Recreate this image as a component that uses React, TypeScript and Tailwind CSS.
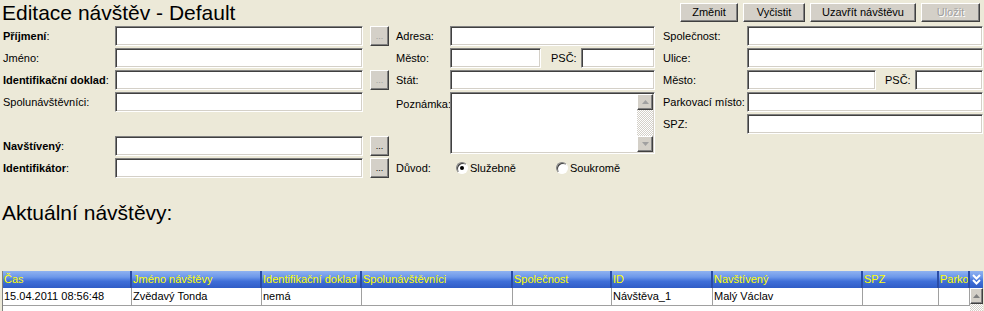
import type { ReactNode } from 'react'

const sunken =
  'bg-white border border-[#808080] border-b-white border-r-white shadow-[inset_1px_1px_0_#404040,inset_-1px_-1px_0_#d4d0c8]'
const raised =
  'bg-[#d4d0c8] border border-white border-r-[#404040] border-b-[#404040] shadow-[inset_-1px_-1px_0_#808080]'
const checker =
  'bg-[repeating-conic-gradient(#ffffff_0%_25%,#d4d0c8_0%_50%)] bg-[length:2px_2px]'

function Field({ w }: { w: string }) {
  return <div className={`h-[20px] ${w} ${sunken}`} />
}

function Dots({ dim }: { dim?: boolean }) {
  return (
    <div
      className={`ml-[7px] flex h-[20px] w-[19px] items-end justify-center pb-[4px] text-[9px] leading-none ${raised} ${
        dim ? 'text-[#a0a0a0]' : 'text-black'
      }`}
    >
      ...
    </div>
  )
}

function Btn({ children, w, disabled }: { children: ReactNode; w: string; disabled?: boolean }) {
  return (
    <div
      className={`flex h-[19px] items-center justify-center ${w} ${raised} ${
        disabled ? 'text-[#a0a0a0] [text-shadow:1px_1px_0_#ffffff]' : 'text-black'
      }`}
    >
      {children}
    </div>
  )
}

function Row({ label, w, children }: { label?: ReactNode; w: string; children?: ReactNode }) {
  return (
    <div className="mb-[2px] flex h-[20px] items-center">
      <div className={`${w} shrink-0 pl-[1px]`}>{label}</div>
      {children}
    </div>
  )
}

function Arrow({ up, color = '#a0a0a0' }: { up?: boolean; color?: string }) {
  return (
    <svg width="7" height="4" viewBox="0 0 7 4">
      <polygon points={up ? '0,4 7,4 3.5,0' : '0,0 7,0 3.5,4'} fill={color} />
    </svg>
  )
}

function ScrollBtn({ up }: { up?: boolean }) {
  return (
    <div className={`flex h-[16px] w-full shrink-0 items-center justify-center ${raised}`}>
      <Arrow up={up} />
    </div>
  )
}

function Radio({ checked, label }: { checked?: boolean; label: string }) {
  return (
    <div className="flex w-[100px] items-center">
      <div className="flex h-[12px] w-[12px] items-center justify-center rounded-full border border-[#808080] border-b-white border-r-white bg-white shadow-[inset_1px_1px_0_#404040]">
        {checked && <div className="h-[4px] w-[4px] rounded-full bg-black" />}
      </div>
      <span className="ml-[2px]">{label}</span>
    </div>
  )
}

const cols = [
  { t: 'Čas', w: 'w-[129px]', v: '15.04.2011 08:56:48' },
  { t: 'Jméno návštěvy', w: 'w-[130px]', v: 'Zvědavý Tonda' },
  { t: 'Identifikační doklad', w: 'w-[100px]', v: 'nemá' },
  { t: 'Spolunávštěvníci', w: 'w-[151px]', v: '' },
  { t: 'Společnost', w: 'w-[99px]', v: '' },
  { t: 'ID', w: 'w-[101px]', v: 'Návštěva_1' },
  { t: 'Navštívený', w: 'w-[150px]', v: 'Malý Václav' },
  { t: 'SPZ', w: 'w-[76px]', v: '' },
  { t: 'Parkovací místo', w: 'w-[31px]', v: '' },
]

const headBg =
  'bg-[linear-gradient(#8fb2f0_0%,#6d98ea_35%,#3f6fd8_60%,#2f5cc6_100%)]'

export default function App() {
  return (
    <div className="h-[311px] w-[984px] overflow-hidden bg-[#ece9d8] font-['Liberation_Sans',Arial,sans-serif] text-[11px] text-black">
      {/* title + action buttons */}
      <div className="flex h-[26px] items-start justify-between">
        <div className="mt-[1px] pl-[2px] text-[21px] leading-[24px]">Editace návštěv - Default</div>
        <div className="mr-[4px] mt-[3px] flex gap-[5px]">
          <Btn w="w-[58px]">Změnit</Btn>
          <Btn w="w-[62px]">Vyčistit</Btn>
          <Btn w="w-[106px]">Uzavřít návštěvu</Btn>
          <Btn w="w-[59px]" disabled>
            Uložit
          </Btn>
        </div>
      </div>

      {/* form */}
      <div className="flex h-[154px] pl-[2px]">
        <div className="w-[387px]">
          <Row w="w-[113px]" label={<><b>Příjmení</b>:</>}>
            <Field w="w-[248px]" />
            <Dots dim />
          </Row>
          <Row w="w-[113px]" label="Jméno:">
            <Field w="w-[248px]" />
          </Row>
          <Row w="w-[113px]" label={<><b>Identifikační doklad</b>:</>}>
            <Field w="w-[248px]" />
            <Dots dim />
          </Row>
          <Row w="w-[113px]" label="Spolunávštěvníci:">
            <Field w="w-[248px]" />
          </Row>
          <Row w="w-[113px]" />
          <Row w="w-[113px]" label={<><b>Navštívený</b>:</>}>
            <Field w="w-[248px]" />
            <Dots />
          </Row>
          <Row w="w-[113px]" label={<><b>Identifikátor</b>:</>}>
            <Field w="w-[248px]" />
            <Dots />
          </Row>
        </div>

        <div className="ml-[6px] w-[260px]">
          <Row w="w-[55px]" label="Adresa:">
            <Field w="w-[205px]" />
          </Row>
          <Row w="w-[55px]" label="Město:">
            <Field w="w-[91px]" />
            <span className="ml-[10px] w-[30px]">PSČ:</span>
            <Field w="w-[74px]" />
          </Row>
          <Row w="w-[55px]" label="Stát:">
            <Field w="w-[205px]" />
          </Row>
          <div className="mb-[4px] flex h-[62px]">
            <div className="w-[55px] shrink-0 pl-[1px] pt-[4px]">Poznámka:</div>
            <div className={`flex h-[62px] w-[205px] justify-end p-[1px] pl-0 ${sunken}`}>
              <div className="flex w-[16px] flex-col">
                <ScrollBtn up />
                <div className={`flex-1 ${checker}`} />
                <ScrollBtn />
              </div>
            </div>
          </div>
          <Row w="w-[55px]" label="Důvod:">
            <div className="ml-[6px] flex">
              <Radio checked label="Služebně" />
              <Radio label="Soukromě" />
            </div>
          </Row>
        </div>

        <div className="ml-[7px] w-[321px]">
          <Row w="w-[85px]" label="Společnost:">
            <Field w="w-[236px]" />
          </Row>
          <Row w="w-[85px]" label="Ulice:">
            <Field w="w-[236px]" />
          </Row>
          <Row w="w-[85px]" label="Město:">
            <Field w="w-[129px]" />
            <span className="ml-[9px] w-[30px]">PSČ:</span>
            <Field w="w-[68px]" />
          </Row>
          <Row w="w-[85px]" label="Parkovací místo:">
            <Field w="w-[236px]" />
          </Row>
          <Row w="w-[85px]" label="SPZ:">
            <Field w="w-[236px]" />
          </Row>
        </div>
      </div>

      <div className="mt-[21px] pl-[2px] text-[21px] leading-[24px]">Aktuální návštěvy:</div>

      {/* grid */}
      <div className="ml-[2px] mt-[46px] flex h-[40px] w-[981px] border-l border-[#808080] bg-white">
        <div className="flex flex-col">
          <div className={`flex h-[17px] ${headBg}`}>
            {cols.map((c) => (
              <div
                key={c.t}
                className={`${c.w} shrink-0 overflow-hidden whitespace-nowrap border-r-2 border-r-[#2a4ca6] pl-[1px] leading-[17px] text-[#ffff00]`}
              >
                {c.t}
              </div>
            ))}
          </div>
          <div className="flex h-[18px] border-b border-[#a0a0a0]">
            {cols.map((c) => (
              <div
                key={c.t}
                className={`${c.w} shrink-0 overflow-hidden whitespace-nowrap border-r border-[#a0a0a0] pl-[1px] leading-[17px]`}
              >
                {c.v}
              </div>
            ))}
          </div>
        </div>
        <div className="flex w-[14px] flex-col">
          <div className={`flex h-[17px] items-center justify-center ${headBg}`}>
            <svg width="9" height="11" viewBox="0 0 9 11">
              <polyline points="1,1 4.5,4.5 8,1" fill="none" stroke="#ffffff" strokeWidth="2" />
              <polyline points="1,6 4.5,9.5 8,6" fill="none" stroke="#ffffff" strokeWidth="2" />
            </svg>
          </div>
          <div className={`flex h-[16px] items-center justify-center ${raised}`}>
            <Arrow up color="#808080" />
          </div>
          <div className={`flex-1 ${checker}`} />
        </div>
      </div>
    </div>
  )
}
